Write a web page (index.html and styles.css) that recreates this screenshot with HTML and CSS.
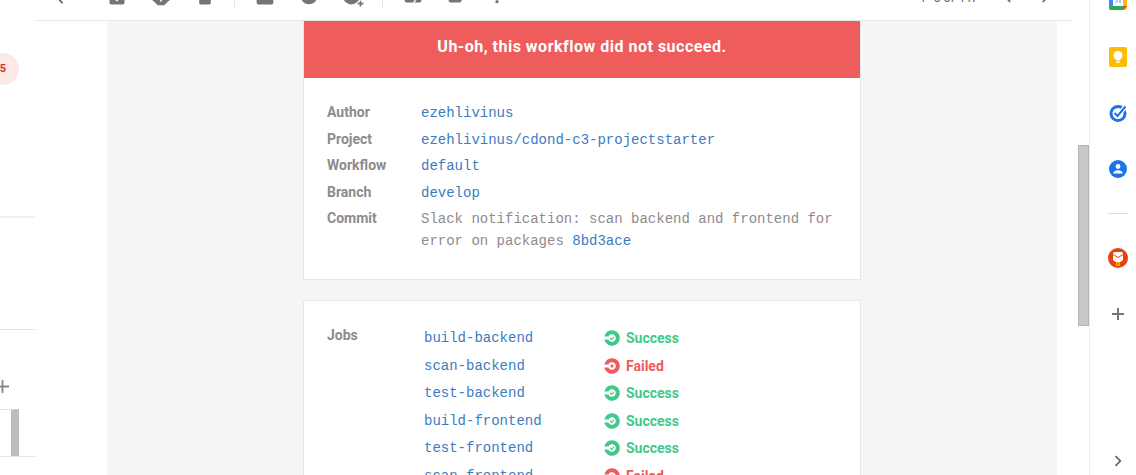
FILE: index.html
```html
<!DOCTYPE html>
<html lang="en">
<head>
  <meta charset="UTF-8" />
  <title>Uh-oh, this workflow did not succeed</title>
  <link rel="stylesheet" href="styles.css">
</head>
<body>
  <svg class="defs" width="0" height="0">
    <symbol id="ok" viewBox="0 0 16 16">
      <path d="M.33 6.600A7.800 7.800 0 1 1 .33 9.400H4.470A3.800 3.800 0 1 0 4.470 6.600Z" fill="#41c98b"/>
      <path d="M6.300 8l1.300 1.300 2.300-2.500" fill="none" stroke="#41c98b" stroke-width="1.200"/>
    </symbol>
    <symbol id="fail" viewBox="0 0 16 16">
      <path d="M.33 6.600A7.800 7.800 0 1 1 .33 9.400H4.470A3.800 3.800 0 1 0 4.470 6.600Z" fill="#ef5b5b"/>
      <rect x="6.600" y="6.600" width="2.800" height="2.800" fill="#ef5b5b"/>
    </symbol>
  </svg>

  <div class="app">
    <div class="rail">
      <div class="badge">5</div>
      <div class="rail-line rail-line-soft"></div>
      <div class="rail-line rail-line-second"></div>
      <div class="rail-plus"><svg width="13" height="13" viewBox="0 0 14 14"><path d="M6 0h2v6h6v2H8v6H6V8H0V6h6z" fill="#8a8a8a"/></svg></div>
      <div class="rail-box"><span class="rail-thumb"></span></div>
    </div>

    <div class="main">
      <div class="toolbar">
        <span class="tool tool-back"><svg width="20" height="20" viewBox="0 0 24 24"><path d="M20 11H7.800l5.600-5.600L12 4l-8 8 8 8 1.400-1.400L7.800 13H20z" fill="#5f6368"/></svg></span>
        <span class="tool"><svg width="20" height="20" viewBox="0 0 24 24"><path d="M3 6.500C3 5.500 4 4 6 3h12c2 1 3 2.500 3 3.500V19a2 2 0 0 1-2 2H5a2 2 0 0 1-2-2z" fill="#757575"/><path d="M12 17.500L6.500 12H10v-2h4v2h3.500z" fill="#fff"/></svg></span>
        <span class="tool"><svg width="20" height="20" viewBox="0 0 24 24"><path d="M8 2h8l6 6v8l-6 6H8l-6-6V8z" fill="#757575"/><path d="M11 15.500h2v2h-2z" fill="#fff"/></svg></span>
        <span class="tool"><svg width="20" height="20" viewBox="0 0 24 24"><path d="M5 7h14v12a2 2 0 0 1-2 2H7a2 2 0 0 1-2-2z" fill="#757575"/></svg></span>
        <span class="sep"></span>
        <span class="tool"><svg width="20" height="20" viewBox="0 0 24 24"><path d="M2 4h20v15a2 2 0 0 1-2 2H4a2 2 0 0 1-2-2z" fill="#757575"/></svg></span>
        <span class="tool tool-up"><svg width="20" height="20" viewBox="0 0 24 24"><circle cx="12" cy="12" r="10" fill="#757575"/></svg></span>
        <span class="tool"><svg width="20" height="20" viewBox="0 0 24 24"><circle cx="10" cy="11" r="10" fill="#757575"/><path d="M20 16.500h2v2.500h2.500v2H22v2.500h-2V21h-2.500v-2H20z" fill="#757575"/></svg></span>
        <span class="sep"></span>
        <span class="tool tool-up2"><svg width="20" height="20" viewBox="0 0 24 24"><path d="M2 4h20v15a2 2 0 0 1-2 2H4a2 2 0 0 1-2-2z" fill="#757575"/><path d="M14 21l2-2-2-1-2 3z" fill="#fff"/></svg></span>
        <span class="tool tool-up2"><svg width="20" height="20" viewBox="0 0 24 24"><path d="M2 5h14l6 7-6 9H4a2 2 0 0 1-2-2z" fill="#757575"/></svg></span>
        <span class="tool tool-more"><svg width="20" height="20" viewBox="0 0 24 24"><circle cx="12" cy="20" r="2" fill="#757575"/></svg></span>
        <div class="pager">
          <span class="pager-text">1–3 of 447</span>
          <svg class="pager-prev" width="20" height="20" viewBox="0 0 24 24"><path d="M15.400 7.400L14 6l-6 6 6 6 1.400-1.400L10.800 12z" fill="#5f6368"/></svg>
          <svg class="pager-next" width="20" height="20" viewBox="0 0 24 24"><path d="M8.600 16.600L10 18l6-6-6-6-1.400 1.400L13.200 12z" fill="#5f6368"/></svg>
        </div>
      </div>

      <div class="content">
        <div class="mail">
          <div class="card">
            <div class="alert">Uh-oh, this workflow did not succeed.</div>
            <div class="details">
              <div class="row"><span class="label">Author</span><a class="value">ezehlivinus</a></div>
              <div class="row"><span class="label">Project</span><a class="value">ezehlivinus/cdond-c3-projectstarter</a></div>
              <div class="row"><span class="label">Workflow</span><a class="value">default</a></div>
              <div class="row"><span class="label">Branch</span><a class="value">develop</a></div>
              <div class="row row-commit"><span class="label">Commit</span><span class="value message">Slack notification: scan backend and frontend for error on packages <a class="value">8bd3ace</a></span></div>
            </div>
          </div>

          <div class="card jobs">
            <span class="label jobs-label">Jobs</span>
            <div class="job-list">
              <div class="job"><a class="value job-name">build-backend</a><span class="status success"><svg width="16" height="16"><use href="#ok"/></svg>Success</span></div>
              <div class="job"><a class="value job-name">scan-backend</a><span class="status failed"><svg width="16" height="16"><use href="#fail"/></svg>Failed</span></div>
              <div class="job"><a class="value job-name">test-backend</a><span class="status success"><svg width="16" height="16"><use href="#ok"/></svg>Success</span></div>
              <div class="job"><a class="value job-name">build-frontend</a><span class="status success"><svg width="16" height="16"><use href="#ok"/></svg>Success</span></div>
              <div class="job"><a class="value job-name">test-frontend</a><span class="status success"><svg width="16" height="16"><use href="#ok"/></svg>Success</span></div>
              <div class="job"><a class="value job-name">scan-frontend</a><span class="status failed"><svg width="16" height="16"><use href="#fail"/></svg>Failed</span></div>
            </div>
          </div>
        </div>
        <div class="scrollbar"><div class="scroll-thumb"></div></div>
      </div>
    </div>

    <div class="side">
      <svg class="side-calendar" width="18" height="18" viewBox="0 0 18 18">
        <rect width="18" height="18" rx="2" fill="#fbbc04"/>
        <path d="M0 2a2 2 0 0 1 2-2h12v4H4v10H0z" fill="#4285f4"/>
        <path d="M0 14h14v4H2a2 2 0 0 1-2-2z" fill="#34a853"/>
        <path d="M14 18v-4h4z" fill="#ea4335"/>
        <rect x="4" y="4" width="10" height="10" fill="#fff"/>
        <path d="M5.500 5.500h2.500v1l-1 1.200c1 0 1.200.8 1.200 1.300 0 1-.8 1.600-1.500 1.600M10 6.500l1-1v5.500" fill="none" stroke="#4285f4" stroke-width=".9"/>
      </svg>
      <svg class="side-keep" width="18" height="20" viewBox="0 0 18 20">
        <rect width="18" height="20" rx="2" fill="#fbbc04"/>
        <circle cx="9" cy="8.500" r="4.500" fill="#fff"/>
        <rect x="7" y="11" width="4" height="2.500" fill="#fff"/>
        <rect x="7" y="14.500" width="4" height="1.300" fill="#fff"/>
      </svg>
      <svg class="side-tasks" width="20" height="20" viewBox="0 0 20 20">
        <circle cx="10" cy="10.500" r="7" fill="none" stroke="#1a73e8" stroke-width="3"/>
        <path d="M6.500 10l3 3L17.500 3.500" fill="none" stroke="#fff" stroke-width="4.500"/>
        <path d="M6.500 10l3 3L17.500 3.500" fill="none" stroke="#1a73e8" stroke-width="2"/>
      </svg>
      <svg class="side-contacts" width="18" height="18" viewBox="0 0 18 18">
        <circle cx="9" cy="9" r="9" fill="#1a73e8"/>
        <circle cx="9" cy="6.500" r="2.400" fill="#fff"/>
        <path d="M4.300 13.500c0-2.400 2.500-3.300 4.700-3.300s4.700.9 4.700 3.300z" fill="#fff"/>
      </svg>
      <div class="side-line"></div>
      <svg class="side-addon" width="20" height="20" viewBox="0 0 20 20">
        <circle cx="10" cy="10" r="10" fill="#e8430f"/>
        <path d="M5 5.500a1.500 1.500 0 0 1 1.500-1.500h7A1.500 1.500 0 0 1 15 5.500V12l-2.500 2h-5L5 12z" fill="#fff"/>
        <path d="M5 6.500l5 3 5-3" fill="none" stroke="#e8430f" stroke-width="1"/>
        <rect x="8" y="14" width="4" height="4" rx="1" fill="#fbbc04"/>
        <rect x="9.200" y="15.200" width="1.600" height="1.600" fill="#e8430f"/>
      </svg>
      <svg class="side-plus" width="12" height="12" viewBox="0 0 12 12"><path d="M5 0h2v5h5v2H7v5H5V7H0V5h5z" fill="#757575"/></svg>
      <svg class="side-more" width="10" height="12" viewBox="0 0 10 12"><path d="M2.500 1.200L7.300 6l-4.800 4.800" fill="none" stroke="#5f6368" stroke-width="1.700"/></svg>
    </div>
  </div>
</body>
</html>
```

FILE: styles.css
```css
* {
  box-sizing: border-box;
}
html, body {
  margin: 0;
  height: 100%;
  overflow: hidden;
}
body {
  font-family: Roboto, Arial, sans-serif;
  background-color: white;
}
.defs {
  display: block;
  height: 0;
}
.app {
  display: flex;
  height: 475px;
  overflow: hidden;
}

/* left rail, mostly cut off */
.rail {
  width: 35px;
  flex-shrink: 0;
  padding-top: 53px;
}
.badge {
  width: 32px;
  height: 32px;
  margin-left: -13px;
  border-radius: 50%;
  background-color: #fce8e6;
  color: #d93025;
  font-size: 11px;
  font-weight: 700;
  line-height: 32px;
  text-align: center;
}
.rail-line {
  height: 1px;
  background-color: #e4e4e4;
}
.rail-line-soft {
  height: 2px;
  margin-top: 131px;
  background-color: #efefef;
}
.rail-line-second {
  margin-top: 111px;
}
.rail-plus {
  display: flex;
  align-items: center;
  height: 26px;
  margin: 43px 0 0 -4px;
}
.rail-box {
  width: 35px;
  height: 48px;
  margin-top: 10px;
  border-bottom: 1px solid #e4e4e4;
}
.rail-thumb {
  display: block;
  width: 19px;
  height: 47px;
  border-top: 1px solid #e4e4e4;
  border-right: 8px solid #bdbdbd;
}

/* middle */
.main {
  width: 1054px;
  flex-shrink: 0;
  display: flex;
  flex-direction: column;
}
.toolbar {
  height: 21px;
  width: 1038px;
  flex-shrink: 0;
  display: flex;
  align-items: flex-end;
  padding-bottom: 13px;
  border-bottom: 1px solid #e6e8eb;
  overflow: hidden;
}
.tool {
  width: 44px;
  height: 20px;
  flex-shrink: 0;
  display: flex;
  justify-content: center;
}
.tool svg {
  flex-shrink: 0;
  overflow: visible;
}
.tool-back {
  margin-right: 16px;
  padding-left: 10px;
}
.tool-up {
  transform: translateY(-1px);
}
.tool-up2 {
  transform: translateY(-2px);
}
.tool-more {
  margin-left: -4px;
  transform: translateY(-2px);
}
.sep {
  width: 1px;
  height: 20px;
  margin: 0 8px 0 7px;
  flex-shrink: 0;
  background-color: #e4e4e4;
}
.pager {
  margin-left: auto;
  display: flex;
  align-items: flex-end;
  height: 20px;
  transform: translateY(-1px);
}
.pager-text {
  color: #5f6368;
  font-size: 12px;
  line-height: 16px;
  margin-right: 20px;
}
.pager-prev {
  margin-right: 17px;
  transform: translateY(1.5px);
}
.pager-next {
  margin-right: 18px;
  transform: translateY(1.5px);
}

.content {
  flex: 1;
  display: flex;
  min-height: 0;
}
.mail {
  width: 950px;
  margin-left: 72px;
  margin-right: 21px;
  padding-left: 196px;
  background-color: #f5f5f5;
  flex-shrink: 0;
}
.card {
  width: 558px;
  background-color: white;
  border: 1px solid #e8e8e8;
  border-top: none;
}
.alert {
  height: 57px;
  background-color: #ee5c5c;
  color: white;
  font-size: 16px;
  font-weight: 700;
  letter-spacing: 0.5px;
  line-height: 52px;
  text-align: center;
}
.details {
  padding: 21px 23px 27px 23px;
}
.row {
  display: flex;
  align-items: baseline;
  height: 26.5px;
  line-height: 26.5px;
}
.row-commit {
  height: auto;
  line-height: 22px;
  padding-top: 2px;
}
.label {
  width: 94px;
  flex-shrink: 0;
  color: #8f8b8b;
  font-size: 14px;
  font-weight: 700;
}
.value {
  font-family: "Liberation Mono", monospace;
  font-size: 14px;
  color: #3b7cbf;
}
.message {
  color: #8f8b8b;
}
.jobs {
  display: flex;
  margin-top: 20px;
  border-top: 1px solid #e8e8e8;
  padding: 23.5px 0 0 23px;
}
.jobs-label {
  width: 97px;
  line-height: 21px;
}
.job {
  display: flex;
  align-items: center;
  height: 27.5px;
}
.job-name {
  width: 180px;
}
.status {
  display: flex;
  align-items: center;
  font-size: 14px;
  font-weight: 700;
}
.status svg {
  margin-right: 6px;
}
.success {
  color: #41c98b;
}
.failed {
  color: #ef5b5b;
}
.scrollbar {
  width: 11px;
  flex-shrink: 0;
  padding-top: 124px;
}
.scroll-thumb {
  height: 181px;
  background-color: #c9c9c9;
  border: 1px solid #b4b4b4;
}

/* right side panel */
.side {
  flex: 1;
  border-left: 1px solid #eeeeee;
  display: flex;
  flex-direction: column;
  align-items: center;
  padding-left: 10px;
}
.side svg {
  flex-shrink: 0;
}
.side-calendar {
  margin-top: -8px;
}
.side-keep {
  margin-top: 37px;
}
.side-tasks {
  margin-top: 36px;
}
.side-contacts {
  margin-top: 37px;
}
.side-line {
  width: 20px;
  height: 1px;
  margin-top: 35px;
  flex-shrink: 0;
  background-color: #dadce0;
}
.side-addon {
  margin-top: 34px;
}
.side-plus {
  margin-top: 40px;
}
.side-more {
  margin-top: 135px;
}
```
